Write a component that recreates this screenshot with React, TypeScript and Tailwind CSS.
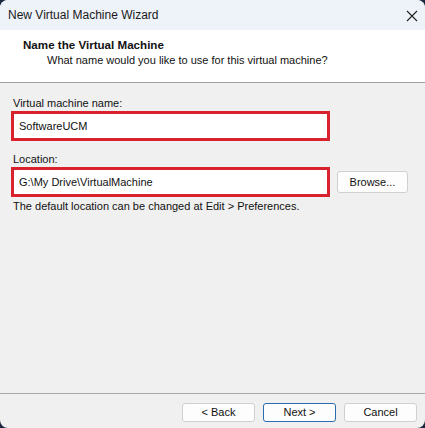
import React from "react";

const font = { fontFamily: '"Liberation Sans", Arial, sans-serif' };

function Field({ value }: { value: string }) {
  return (
    <div className="h-[30px] w-[319px] border-[3px] border-[#d8232f] bg-white flex items-center pl-[5px] text-[11px] text-[#111]">
      {value}
    </div>
  );
}

function Btn({ label, primary }: { label: string; primary?: boolean }) {
  return (
    <button
      className={
        "h-[19px] w-[73px] rounded-[3px] bg-[#fdfdfd] text-[11px] leading-none text-[#111] flex items-center justify-center " +
        (primary ? "border border-[#2b6cb0]" : "border border-[#d0d0d0]")
      }
    >
      {label}
    </button>
  );
}

export default function App() {
  return (
    <div className="w-[425px] h-[428px] bg-[#1c2840]" style={font}>
      <div className="w-full h-full rounded-[8px] overflow-hidden bg-[#f0f0f0] flex flex-col">
        <div className="h-[30px] shrink-0 bg-[#eef2f9] flex items-center justify-between pl-[8px] pr-[7px]">
          <span className="text-[12px] text-[#1a1a1a]">New Virtual Machine Wizard</span>
          <svg width="12" height="12" viewBox="0 0 12 12" className="mt-[1px]">
            <path d="M1 1L11 11M11 1L1 11" stroke="#222" strokeWidth="1.1" />
          </svg>
        </div>
        <div className="h-[53px] shrink-0 bg-white border-b border-[#a0a0a0] pt-[8px]">
          <div className="pl-[23px] text-[11.6px] font-bold text-[#111] leading-[14px]">Name the Virtual Machine</div>
          <div className="pl-[47px] text-[11px] text-[#111] leading-[14px] mt-[1px]">
            What name would you like to use for this virtual machine?
          </div>
        </div>
        <div className="flex-1 px-[11px] pt-[13px]">
          <div className="pl-[2px] text-[11px] text-[#111] leading-[14px]">Virtual machine name:</div>
          <div className="mt-[1px]">
            <Field value="SoftwareUCM" />
          </div>
          <div className="pl-[2px] mt-[11px] text-[11px] text-[#111] leading-[14px]">Location:</div>
          <div className="mt-[1px] flex items-center gap-[7px]">
            <Field value="G:\My Drive\VirtualMachine" />
            <button className="h-[22px] w-[71px] rounded-[3px] border border-[#d0d0d0] bg-[#fdfdfd] text-[11px] leading-none text-[#111]">
              Browse...
            </button>
          </div>
          <div className="pl-[2px] mt-[2px] text-[11px] text-[#111] leading-[14px]">
            The default location can be changed at Edit &gt; Preferences.
          </div>
        </div>
        <div className="h-[35px] shrink-0 border-t-[1.5px] border-[#a8a8a8] flex items-start justify-end gap-[8px] pr-[8px] pt-[9px]">
          <Btn label="< Back" />
          <Btn label="Next >" primary />
          <Btn label="Cancel" />
        </div>
      </div>
    </div>
  );
}
